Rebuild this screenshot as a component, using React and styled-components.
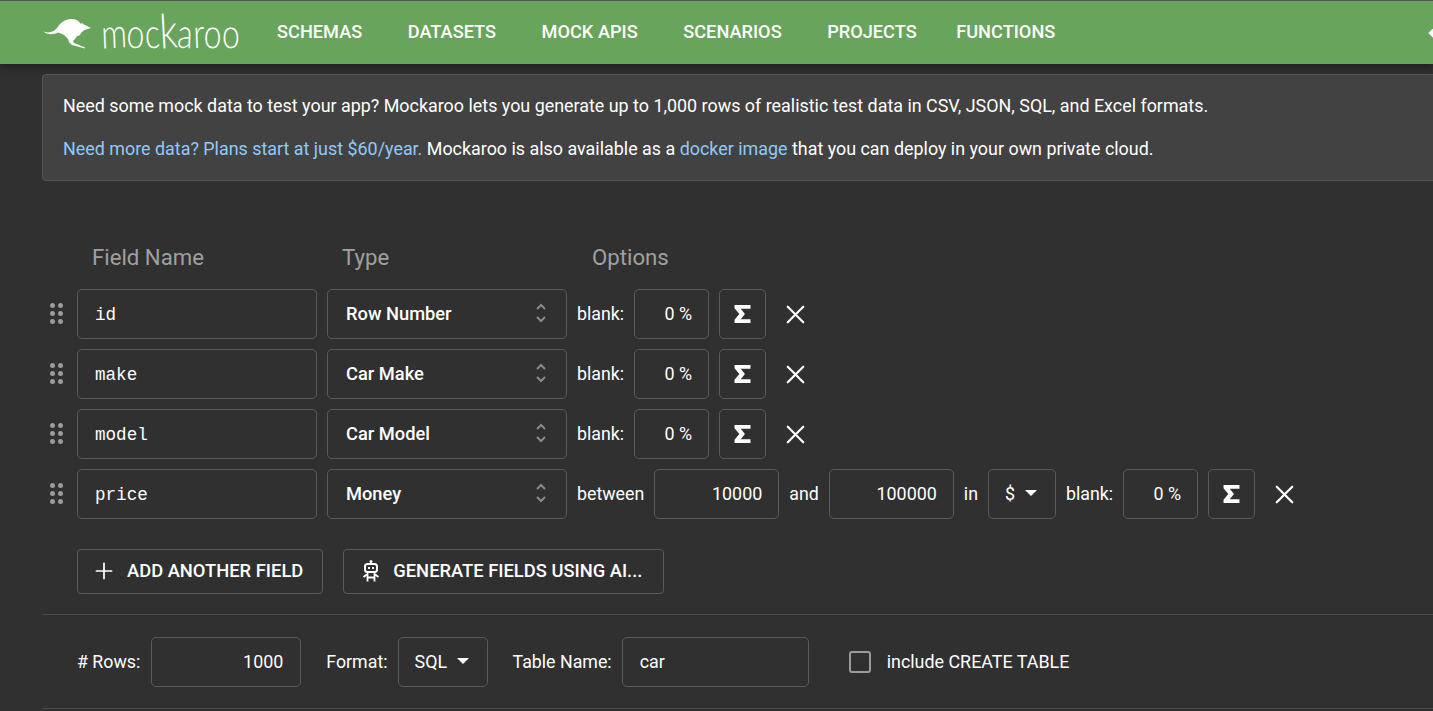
import styled, { createGlobalStyle } from 'styled-components'
import { Plus, X } from 'lucide-react'

const GlobalStyle = createGlobalStyle`
  html, body {
    margin: 0;
    padding: 0;
    background: #303030;
    overflow: hidden;
  }
  body {
    font-family: Roboto, "Liberation Sans", sans-serif;
    color: #fff;
  }
`

const navLinks = ['SCHEMAS', 'DATASETS', 'MOCK APIS', 'SCENARIOS', 'PROJECTS', 'FUNCTIONS']

const logoLetters = [
  { c: 'm', r: -3 },
  { c: 'o', r: 4 },
  { c: 'c', r: -4 },
  { c: 'k', r: -4, tall: true },
  { c: 'a', r: 3 },
  { c: 'r', r: -3 },
  { c: 'o', r: 3 },
  { c: 'o', r: -2 },
]

const fields = [
  { name: 'id', type: 'Row Number' },
  { name: 'make', type: 'Car Make' },
  { name: 'model', type: 'Car Model' },
  { name: 'price', type: 'Money', money: true },
]

const Kangaroo = () => (
  <KangarooSvg width="50" height="32" viewBox="42 18 50 32" fill="#fff">
    <path d="M43 31C48 34 54 32 57 28C60 23 65 19 71 19C76 19 79 21 81 24L82 23L84 24.5L91 28L86 29.5C84 30 83 31 81 33C80.5 35 79 36 77 36C76 38 74 40 73 41L74 43L85 47.5L85 48.5L72 45L69 42C69 39 66 37 64 35C61 33.5 60 33 58 32.5C53 35 47 35 43 31Z" />
  </KangarooSvg>
)

const Robot = () => (
  <svg width="18" height="22" viewBox="0 0 18 22" fill="none" stroke="#fff" strokeWidth="2">
    <circle cx="9" cy="1.5" r="1.5" fill="#fff" stroke="none" />
    <rect x="3" y="4" width="12" height="8" rx="2.5" />
    <rect x="6" y="7" width="2" height="2" fill="#fff" stroke="none" />
    <rect x="10" y="7" width="2" height="2" fill="#fff" stroke="none" />
    <path d="M5.5 13V21.5M12.5 13V21.5M5.5 17.5H12.5M5.5 14L1.5 17M12.5 14L16.5 17" strokeWidth="1.8" />
  </svg>
)

const Sigma = () => (
  <svg width="17" height="18" viewBox="0 0 16 19" fill="#fff" preserveAspectRatio="none">
    <path d="M0.5 0H15.5V4H6.3L10.3 9.5L6.3 15H15.5V19H0.5V15.5L5 9.5L0.5 3.5Z" />
  </svg>
)

const Chevrons = () => (
  <svg width="10" height="20" viewBox="0 0 10 20" fill="none" stroke="#8a8a8a" strokeWidth="2">
    <path d="M1 6L5 2L9 6M1 14L5 18L9 14" />
  </svg>
)

const Grip = () => (
  <GripGrid>
    {[0, 1, 2, 3, 4, 5].map((i) => <GripDot key={i} />)}
  </GripGrid>
)

const BlankOptions = () => (
  <>
    <Label>blank:</Label>
    <PctBox>0 %</PctBox>
    <SigmaButton><Sigma /></SigmaButton>
    <RemoveButton><X size={31} strokeWidth={1.7} color="#fff" /></RemoveButton>
  </>
)

const App = () => {
  return (
    <Page>
      <GlobalStyle />
      <Nav>
        <Logo>
          <Kangaroo />
          <LogoText>
            {logoLetters.map((l, i) => <LogoLetter key={i} $r={l.r} $tall={l.tall}>{l.c}</LogoLetter>)}
          </LogoText>
        </Logo>
        <NavList>
          {navLinks.map((link) => <NavLink key={link}>{link}</NavLink>)}
        </NavList>
        <NavEdge />
      </Nav>

      <Intro>
        <IntroLine>
          Need some mock data to test your app? Mockaroo lets you generate up to 1,000 rows of realistic test data in CSV, JSON, SQL, and Excel formats.
        </IntroLine>
        <IntroLine>
          <A>Need more data? Plans start at just $60/year.</A> Mockaroo is also available as a <A>docker image</A> that you can deploy in your own private cloud.
        </IntroLine>
      </Intro>

      <Fields>
        <HeaderRow>
          <HeaderCell $w="250px">Field Name</HeaderCell>
          <HeaderCell $w="250px">Type</HeaderCell>
          <HeaderCell>Options</HeaderCell>
        </HeaderRow>

        {fields.map((field) => (
          <FieldRow key={field.name}>
            <Grip />
            <NameBox>{field.name}</NameBox>
            <TypeBox>
              <span>{field.type}</span>
              <Chevrons />
            </TypeBox>
            {field.money && (
              <>
                <Label>between</Label>
                <NumBox>10000</NumBox>
                <Label>and</Label>
                <NumBox>100000</NumBox>
                <Label>in</Label>
                <SmallSelect $w="68px">$<Caret /></SmallSelect>
              </>
            )}
            <BlankOptions />
          </FieldRow>
        ))}

        <ButtonRow>
          <ActionButton><PlusIcon size={26} strokeWidth={1.6} />ADD ANOTHER FIELD</ActionButton>
          <GenerateButton><Robot />GENERATE FIELDS USING AI...</GenerateButton>
        </ButtonRow>
      </Fields>

      <Divider />

      <Settings>
        <RowsLabel>#&nbsp;Rows:</RowsLabel>
        <RowsBox>1000</RowsBox>
        <SettingLabel>Format:</SettingLabel>
        <SmallSelect $w="90px">SQL<Caret /></SmallSelect>
        <SettingLabel>Table Name:</SettingLabel>
        <TableBox>car</TableBox>
        <Check />
        <CheckLabel>include CREATE TABLE</CheckLabel>
      </Settings>

      <LastDivider />
    </Page>
  )
}

export default App

const Page = styled.div`
  width: 1433px;
  height: 711px;
  overflow: hidden;
`

const Nav = styled.header`
  display: flex;
  align-items: center;
  height: 63px;
  padding-left: 42px;
  background: #68a45c;
  border-top: 1px solid #555;
  box-shadow: 0 2px 10px rgba(0, 0, 0, 0.45);
`

const Logo = styled.div`
  display: flex;
  flex-shrink: 0;
  align-items: center;
  width: 235px;
  height: 100%;
`

const KangarooSvg = styled.svg`
  flex-shrink: 0;
  margin-top: 3px;
`

const LogoText = styled.span`
  display: flex;
  flex-shrink: 0;
  align-items: baseline;
  margin: 0 0 6px 9px;
  font-family: Lato, sans-serif;
  font-weight: 300;
  font-size: 41px;
  line-height: 1;
  white-space: nowrap;
  transform: scaleX(0.78);
  transform-origin: left center;
`

const LogoLetter = styled.span`
  display: inline-block;
  font-size: ${(p) => (p.$tall ? '48px' : '41px')};
  transform: rotate(${(p) => p.$r}deg);
`

const NavList = styled.nav`
  display: flex;
  gap: 45.5px;
  padding-bottom: 2px;
`

const NavLink = styled.a`
  font-size: 18.2px;
  font-weight: 500;
  color: #fff;

  &:last-child {
    margin-left: -6px;
  }
`

const NavEdge = styled.div`
  width: 8px;
  height: 8px;
  margin-left: auto;
  margin-right: -5px;
  background: #fff;
  transform: rotate(45deg);
`

const Intro = styled.section`
  box-sizing: border-box;
  height: 107px;
  margin: 10px -10px 0 42px;
  padding: 20px 20px 0;
  background: #424242;
  border: 1px solid #555;
  border-radius: 4px;
`

const IntroLine = styled.p`
  margin: 0 0 21px;
  font-size: 17.9px;
  line-height: 22px;
  color: #fff;
`

const A = styled.a`
  color: #90caf9;
`

const Fields = styled.section`
  display: flex;
  flex-direction: column;
  padding: 58px 0 0 50px;
`

const HeaderRow = styled.div`
  display: flex;
  height: 50px;
  padding: 0 0 14px 42px;
  box-sizing: border-box;
  align-items: center;
`

const HeaderCell = styled.div`
  width: ${(p) => p.$w || 'auto'};
  font-size: 22.2px;
  color: #a0a0a0;
`

const FieldRow = styled.div`
  display: flex;
  align-items: center;
  height: 50px;
  margin-bottom: 10px;
`

const GripGrid = styled.div`
  display: grid;
  grid-template-columns: 5px 5px;
  gap: 3px;
  margin: 0 14px 2px 0;
`

const GripDot = styled.span`
  width: 5px;
  height: 5px;
  border-radius: 50%;
  background: #9a9a9a;
`

const Box = styled.div`
  box-sizing: border-box;
  display: flex;
  align-items: center;
  height: 50px;
  padding-bottom: 2px;
  border: 1px solid #5a5a5a;
  border-radius: 5px;
  font-size: 17.9px;
  color: #fff;
`

const NameBox = styled(Box)`
  width: 240px;
  padding: 1px 0 0 17px;
  font-family: "Liberation Mono", monospace;
  font-size: 17.6px;
`

const TypeBox = styled(Box)`
  justify-content: space-between;
  width: 240px;
  margin-left: 10px;
  padding: 0 20px 2px 18px;
  font-size: 18.3px;
  font-weight: 500;
`

const Label = styled.span`
  margin: 0 10px 2px;
  font-size: 17.8px;
  color: #fff;
`

const PctBox = styled(Box)`
  justify-content: flex-end;
  width: 75px;
  padding-right: 16px;
`

const NumBox = styled(Box)`
  justify-content: flex-end;
  width: 125px;
  padding-right: 16px;
`

const SigmaButton = styled(Box)`
  justify-content: center;
  width: 47px;
  margin-left: 10px;
  padding-bottom: 0;
`

const RemoveButton = styled.div`
  display: flex;
  margin-left: 13.5px;
`

const SmallSelect = styled(Box)`
  width: ${(p) => p.$w};
  padding-left: 16px;
  gap: 10px;
`

const Caret = styled.span`
  width: 0;
  height: 0;
  border-left: 6px solid transparent;
  border-right: 6px solid transparent;
  border-top: 6px solid #fff;
`

const ButtonRow = styled.div`
  display: flex;
  gap: 20px;
  margin: 20px 0 0 27px;
`

const ActionButton = styled.button`
  display: flex;
  align-items: center;
  gap: 13px;
  height: 45px;
  padding: 0 19px 2px 18px;
  background: transparent;
  border: 1px solid #5a5a5a;
  border-radius: 4px;
  font-family: Roboto, sans-serif;
  font-size: 18.35px;
  font-weight: 500;
  color: #fff;
`

const GenerateButton = styled(ActionButton)`
  padding-right: 21px;
`

const PlusIcon = styled(Plus)`
  margin: 0 -3px 0 -5px;
`

const Divider = styled.hr`
  height: 1px;
  margin: 20px 0 0 42px;
  border: 0;
  background: #4c4c4c;
`

const LastDivider = styled(Divider)`
  margin-top: 21px;
`

const Settings = styled.section`
  display: flex;
  align-items: center;
  margin-top: 22px;
  padding-left: 67px;
`

const RowsLabel = styled(Label)`
  margin-right: 11px;
`

const RowsBox = styled(Box)`
  justify-content: flex-end;
  width: 150px;
  padding-right: 17px;
`

const SettingLabel = styled(Label)`
  margin: 0 10px 2px 25px;
`

const TableBox = styled(Box)`
  width: 187px;
  padding-left: 17px;
`

const Check = styled.span`
  box-sizing: border-box;
  width: 22px;
  height: 22px;
  margin-left: 40px;
  border: 2px solid #9a9a9a;
  border-radius: 3px;
`

const CheckLabel = styled.span`
  margin: 0 0 2px 16px;
  font-size: 17.9px;
  color: #fff;
`
